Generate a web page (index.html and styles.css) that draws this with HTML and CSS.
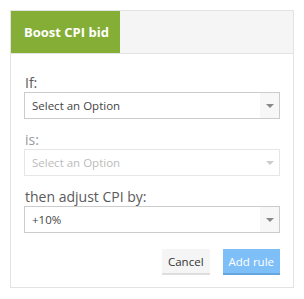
FILE: index.html
```html
<!DOCTYPE html>
<html>
<head>
<meta charset="utf-8">
<link rel="stylesheet" href="styles.css">
</head>
<body>
<div class="card">
  <div class="card-header">
    <div class="tab">Boost CPI bid</div>
  </div>
  <div class="card-body">
    <label class="field-label">If:</label>
    <div class="select">
      <span class="select-text">Select an Option</span>
      <span class="select-arrow"><span class="tri"></span></span>
    </div>
    <label class="field-label disabled-label">is:</label>
    <div class="select disabled">
      <span class="select-text">Select an Option</span>
      <span class="select-arrow"><span class="tri"></span></span>
    </div>
    <label class="field-label">then adjust CPI by:</label>
    <div class="select">
      <span class="select-text">+10%</span>
      <span class="select-arrow"><span class="tri"></span></span>
    </div>
    <div class="actions">
      <button class="btn btn-cancel">Cancel</button>
      <button class="btn btn-add">Add rule</button>
    </div>
  </div>
</div>
</body>
</html>
```
FILE: styles.css
```css
html, body {
  margin: 0;
  padding: 0;
  background: #fff;
}
body {
  padding: 10px;
  font-family: "Open Sans", "Liberation Sans", sans-serif;
}
.card {
  width: 282px;
  border: 1px solid #e3e3e3;
  background: #fff;
}
.card-header {
  display: flex;
  background: #f5f5f5;
  border-bottom: 1px solid #e3e3e3;
  height: 42px;
}
.tab {
  background: #84ae36;
  color: #fff;
  font-weight: 700;
  font-size: 13px;
  width: 109px;
  box-sizing: border-box;
  padding-left: 13px;
  display: flex;
  align-items: center;
}
.card-body {
  padding: 20px 13px 12px 13px;
  display: flex;
  flex-direction: column;
}
.field-label {
  font-size: 14px;
  line-height: 18px;
  color: #5a5a5a;
  padding-left: 1px;
}
.disabled-label {
  color: #9a9a9a;
}
.select {
  height: 25px;
  border: 1px solid #ccc;
  display: flex;
  align-items: stretch;
  margin-bottom: 12px;
}
.select-text {
  flex: 1;
  font-size: 11.5px;
  color: #444;
  padding-left: 7px;
  display: flex;
  align-items: center;
}
.select-arrow {
  width: 19px;
  background: #f7f7f7;
  display: flex;
  align-items: center;
  justify-content: center;
}
.tri {
  width: 0;
  height: 0;
  border-left: 4px solid transparent;
  border-right: 4px solid transparent;
  border-top: 4px solid #888;
}
.select.disabled {
  border-color: #e6e6e6;
}
.select.disabled .select-text {
  color: #bbb;
}
.select.disabled .select-arrow {
  background: #fff;
}
.select.disabled .tri {
  border-top-color: #ccc;
}
.actions {
  display: flex;
  justify-content: flex-end;
  gap: 13px;
  margin-top: 4px;
}
.btn {
  font-family: "Open Sans", "Liberation Sans", sans-serif;
  font-size: 11.5px;
  height: 26px;
  border: none;
  border-bottom: 2px solid;
  padding: 0 6px;
  margin: 0;
  cursor: pointer;
}
.btn-cancel {
  background: #f5f5f5;
  color: #333;
  border-bottom-color: #dedede;
}
.btn-add {
  background: #7fbff8;
  color: #fff;
  border-bottom-color: #64a6e2;
}
```
